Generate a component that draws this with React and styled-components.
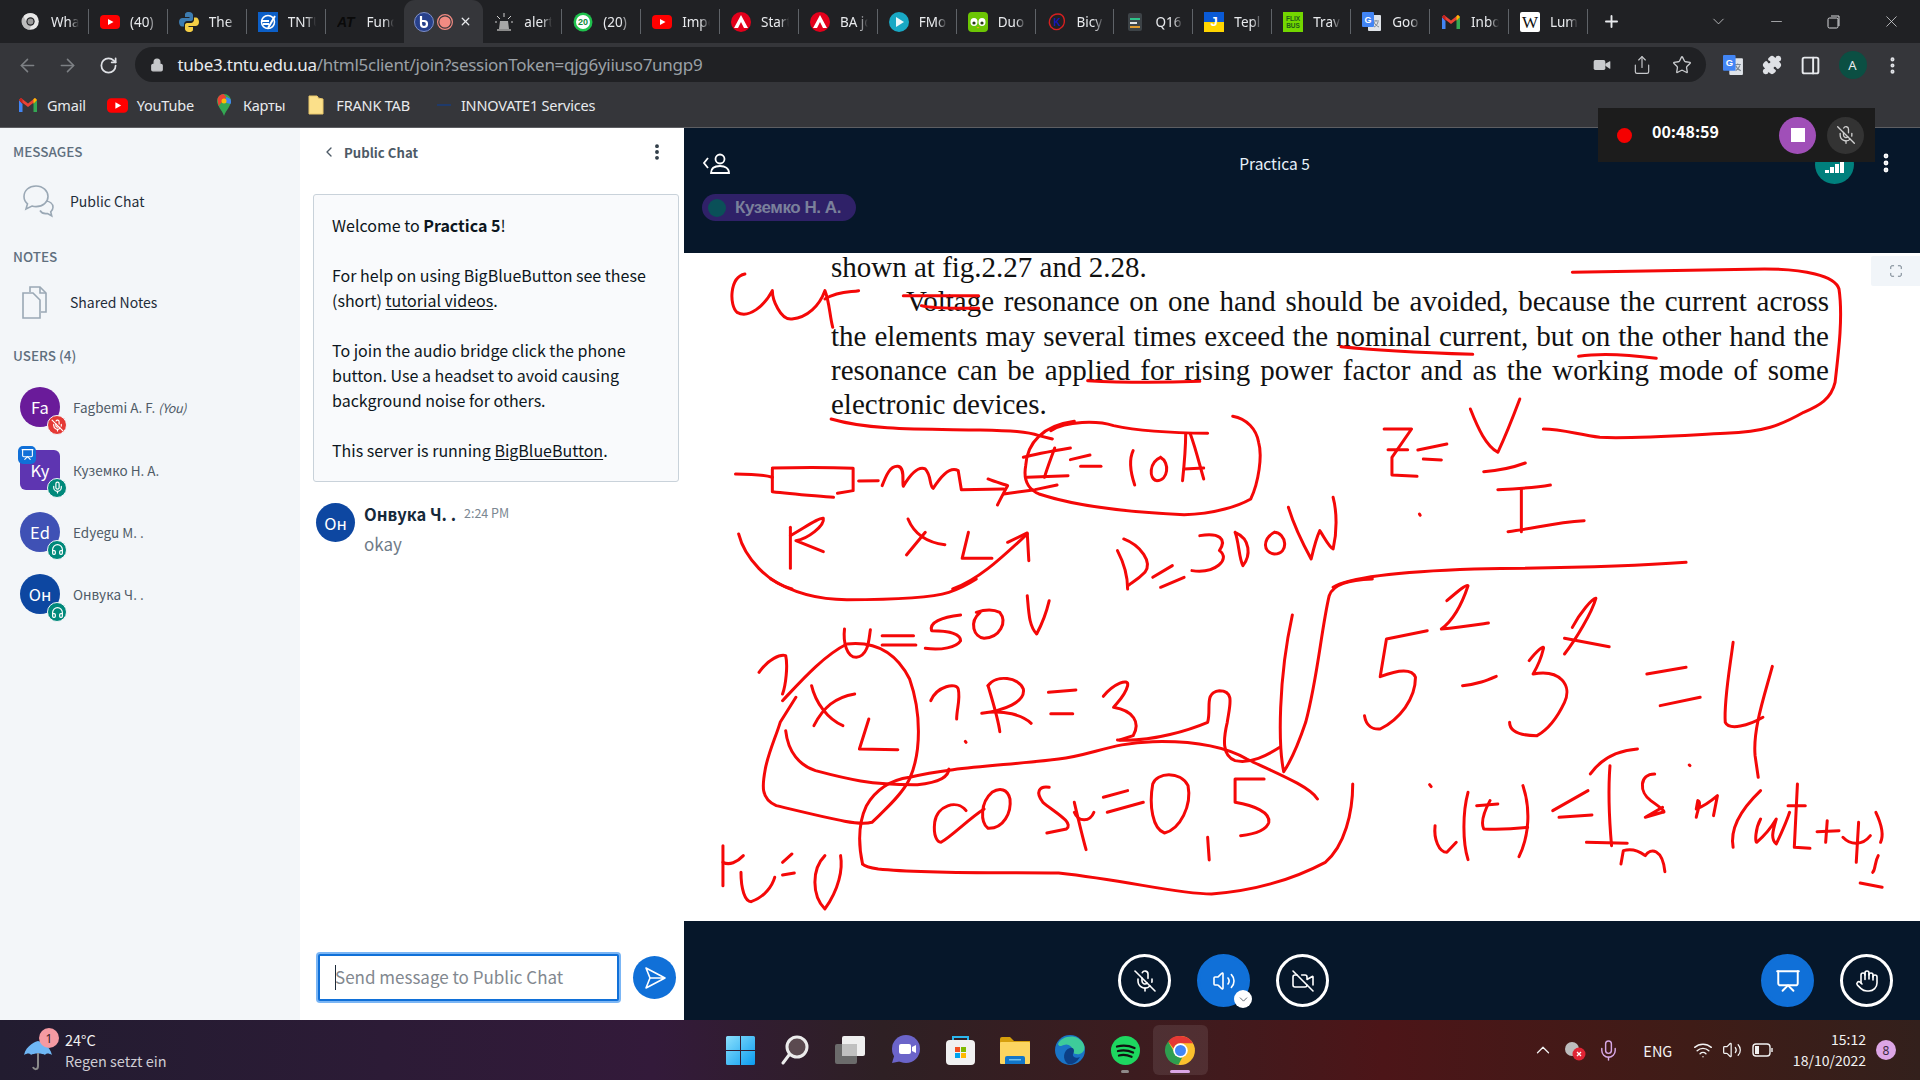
import React from "react";
import styled, { createGlobalStyle } from "styled-components";
import {
  ArrowLeft, ArrowRight, RotateCw, Lock, Minus, X, ChevronDown, ChevronUp, ChevronLeft, Plus, Star, Video,
  EllipsisVertical, Mic, MicOff, Headphones, Volume2, VideoOff, Presentation, Hand, PanelRight, Puzzle, Share,
  Wifi, Maximize,
} from "lucide-react";

const CHROME_FONT = `"Noto Sans", "Open Sans", sans-serif`;
const BBB_FONT = `"Noto Sans CJK SC", "Noto Sans", sans-serif`;

const GlobalStyle = createGlobalStyle`
  html, body { margin: 0; padding: 0; background: #06172a; }
  * { box-sizing: border-box; }
`;

const Page = styled.div`
  width: 1920px;
  height: 1080px;
  overflow: hidden;
  display: flex;
  flex-direction: column;
  position: relative;
  font-family: ${CHROME_FONT};
`;

/* ---------- browser chrome ---------- */
const TabStrip = styled.div`
  height: 43px;
  flex: none;
  background: #202124;
  display: flex;
  align-items: stretch;
  padding-left: 10px;
  color: #e8eaed;
`;
const Tab = styled.div`
  width: 78.9px;
  flex: none;
  display: flex;
  align-items: center;
  gap: 10px;
  padding-left: ${(p) => (p.$active ? "10px" : "11px")};
  padding-right: 10px;
  position: relative;
  background: ${(p) => (p.$active ? "#35363a" : "transparent")};
  border-radius: ${(p) => (p.$active ? "11px 11px 0 0" : "0")};
  &::after {
    content: "";
    display: ${(p) => (p.$noSep ? "none" : "block")};
    position: absolute;
    right: 0;
    top: 9px;
    height: 25px;
    width: 1px;
    background: #5f6368;
  }
`;
const TabIcon = styled.span`
  width: 20px;
  height: 20px;
  flex: none;
  display: block;
  margin-right: ${(p) => p.$mr || 0}px;
  & svg { display: block; }
`;
const TabClose = styled(X)`
  flex: none;
  margin-left: -4px;
`;
const TabTitle = styled.span`
  font-size: 13.5px;
  line-height: 18px;
  white-space: nowrap;
  overflow: hidden;
  flex: 1;
  min-width: 0;
  -webkit-mask-image: linear-gradient(90deg, #000 65%, transparent 100%);
  mask-image: linear-gradient(90deg, #000 65%, transparent 100%);
`;
const NewTab = styled.div`
  width: 47px;
  display: flex;
  align-items: center;
  justify-content: center;
`;
const WindowControls = styled.div`
  margin-left: auto;
  display: flex;
  align-items: center;
  color: #d6d8da;
`;
const WindowBtn = styled.div`
  width: 57.5px;
  height: 100%;
  display: flex;
  align-items: center;
  justify-content: center;
`;
const Toolbar = styled.div`
  height: 44px;
  flex: none;
  background: #35363a;
  display: flex;
  align-items: center;
  padding: 0 0 0 7px;
  color: #c7c9cc;
`;
const NavBtn = styled.div`
  width: 40.5px;
  display: flex;
  justify-content: center;
  color: ${(p) => (p.$dim ? "#7d8084" : "#dfe1e5")};
`;
const Omnibox = styled.div`
  margin-left: 6px;
  width: 1571px;
  height: 35px;
  margin-top: -1px;
  border-radius: 18px;
  background: #202124;
  display: flex;
  align-items: center;
  padding: 0 10px 0 15px;
`;
const Url = styled.div`
  margin-left: 14px;
  font-size: 17px;
  line-height: 22px;
  letter-spacing: -0.28px;
  color: #9aa0a6;
  white-space: nowrap;
  flex: 1;
  & b { font-weight: 400; color: #e8eaed; }
`;
const OmniActions = styled.div`
  display: flex;
  align-items: center;
  gap: 20px;
  color: #c8cacd;
  padding-right: 4px;
`;
const ToolIcons = styled.div`
  display: flex;
  align-items: center;
  gap: 18px;
  margin-left: 17px;
`;
const ToolMenu = styled(EllipsisVertical)`
  margin-left: -3px;
`;
const ProfileDot = styled.div`
  width: 28px;
  height: 28px;
  border-radius: 50%;
  background: #0b4f43;
  color: #e8eaed;
  font-size: 13px;
  display: flex;
  align-items: center;
  justify-content: center;
`;
const Bookmarks = styled.div`
  height: 41px;
  flex: none;
  background: #35363a;
  display: flex;
  align-items: center;
  padding: 0 0 4px 18px;
  border-bottom: 1px solid #5d5e62;
`;
const Bookmark = styled.div`
  display: flex;
  align-items: center;
  gap: ${(p) => p.$inner || 9}px;
  margin-right: ${(p) => p.$gap}px;
  font-size: 14.5px;
  line-height: 18px;
  letter-spacing: -0.2px;
  color: #e8eaed;
  white-space: nowrap;
  & svg { display: block; flex: none; }
`;

/* ---------- bigbluebutton ---------- */
const Content = styled.div`
  flex: 1;
  min-height: 0;
  display: flex;
  font-family: ${BBB_FONT};
`;
const Sidebar = styled.aside`
  width: 300px;
  flex: none;
  background: #f3f6f9;
  padding: 14px 0 0 13px;
`;
const SectionTitle = styled.div`
  font-size: 13.5px;
  line-height: 18px;
  font-weight: 500;
  color: #5f6f7e;
  margin-bottom: ${(p) => p.$after}px;
`;
const NavRow = styled.div`
  display: flex;
  align-items: center;
  height: 40px;
  padding-left: 9px;
  font-size: 14px;
  color: #1f2d3a;
  margin-bottom: ${(p) => p.$after}px;
`;
const NavIcon = styled.span`
  width: 48px;
  flex: none;
  display: block;
  & svg { display: block; }
`;
const UserRow = styled.div`
  display: flex;
  align-items: center;
  height: 62.4px;
  padding-left: 7px;
`;
const Avatar = styled.div`
  width: ${(p) => p.$size || 40}px;
  height: ${(p) => p.$size || 40}px;
  flex: none;
  border-radius: ${(p) => (p.$square ? "6px" : "50%")};
  background: ${(p) => p.$bg};
  color: #fff;
  display: flex;
  align-items: center;
  justify-content: center;
  font-size: 16.5px;
  font-weight: 400;
  position: relative;
`;
const StatusBadge = styled.span`
  position: absolute;
  right: -7px;
  bottom: -8px;
  width: 20px;
  height: 20px;
  border-radius: 50%;
  background: ${(p) => p.$bg};
  color: #fff;
  border: 1px solid #f3f6f9;
  display: flex;
  align-items: center;
  justify-content: center;
`;
const PresenterBadge = styled.span`
  position: absolute;
  left: -2px;
  top: -4px;
  width: 18px;
  height: 18px;
  border-radius: 5px;
  background: #1070d8;
  color: #fff;
  display: flex;
  align-items: center;
  justify-content: center;
`;
const UserName = styled.div`
  margin-left: 13px;
  font-size: 13.5px;
  color: #4f5b67;
  white-space: nowrap;
  & i { font-size: 12.5px; letter-spacing: -0.4px; }
`;
const ChatPanel = styled.section`
  width: 384px;
  flex: none;
  background: #fff;
  display: flex;
  flex-direction: column;
  padding: 0 5px 0 13px;
`;
const ChatHeader = styled.div`
  height: 48px;
  flex: none;
  display: flex;
  align-items: center;
  padding-left: 8px;
  color: #4d5a66;
  font-size: 13.2px;
  font-weight: 700;
  & span { margin-left: 7px; flex: 1; }
  & svg { display: block; }
`;
const ChatMenu = styled(EllipsisVertical)`
  margin-right: 12px;
`;
const Welcome = styled.div`
  margin-top: 18px;
  height: 288px;
  flex: none;
  border: 1px solid #c9d2da;
  border-radius: 3px;
  background: #f9fafc;
  padding: 18px 10px 0 18px;
  font-size: 16px;
  line-height: 25px;
  color: #0d1620;
  & p { margin: 0 0 25px; }
  & u { text-underline-offset: 2px; }
  & b { font-weight: 700; }
`;
const Message = styled.div`
  display: flex;
  margin-top: 21px;
  padding-left: 3px;
  flex: 1;
`;
const MessageBody = styled.div`
  margin-left: 9px;
`;
const MessageHead = styled.div`
  display: flex;
  align-items: baseline;
  gap: 8px;
  font-size: 16.5px;
  line-height: 22px;
  font-weight: 700;
  color: #16293a;
  & time { font-size: 12.5px; font-weight: 400; color: #7b8792; position: relative; top: -3px; }
`;
const MessageText = styled.div`
  margin-top: 5px;
  font-size: 17px;
  line-height: 24px;
  color: #6f7b87;
`;
const Composer = styled.div`
  display: flex;
  align-items: center;
  gap: 14px;
  height: 51px;
  margin-bottom: 17px;
  padding-left: 5px;
`;
const ComposerInput = styled.div`
  width: 301px;
  height: 47px;
  background: #fff;
  border: 2px solid #1070d8;
  border-radius: 2px;
  box-shadow: 0 0 0 2px #7bb6f5;
  display: flex;
  align-items: center;
  padding: 0 0 2px 15px;
  font-size: 17px;
  color: #82888f;
  position: relative;
  &::before {
    content: "";
    position: absolute;
    left: 15px;
    top: 9px;
    height: 25px;
    width: 1px;
    background: #1c2b3a;
  }
`;
const SendBtn = styled.div`
  width: 43px;
  height: 43px;
  border-radius: 50%;
  background: #1070d8;
  display: flex;
  align-items: center;
  justify-content: center;
`;
const Main = styled.main`
  flex: 1;
  min-width: 0;
  display: flex;
  flex-direction: column;
  background: #06172a;
`;
const MeetingHeader = styled.div`
  height: 125px;
  flex: none;
  padding: 25px 22px 0 18px;
  color: #f0f4f8;
`;
const HeaderRow = styled.div`
  display: flex;
  align-items: center;
  height: 20px;
`;
const MeetingTitle = styled.div`
  flex: 1;
  padding-left: 4px;
  font-size: 15.5px;
  line-height: 20px;
  color: #e7f1fa;
  text-align: center;
`;
const HeaderRight = styled.div`
  display: flex;
  align-items: center;
  gap: 20px;
`;
const Signal = styled.div`
  width: 39px;
  height: 39px;
  border-radius: 50%;
  background: #00807d;
  display: flex;
  align-items: flex-end;
  justify-content: center;
  padding: 0 0 11px;
  gap: 1px;
  margin-top: 2px;
`;
const SignalBar = styled.span`
  width: 4px;
  height: ${(p) => p.$h}px;
  background: #fff;
`;
const TalkerPill = styled.div`
  margin-top: 21px;
  width: 154px;
  height: 27px;
  border-radius: 14px;
  background: #2f2168;
  display: flex;
  align-items: center;
  padding-left: 6px;
  font-family: "Liberation Sans", sans-serif;
  font-size: 17px;
  font-weight: 700;
  letter-spacing: -0.45px;
  color: #7a809b;
  & span { margin-left: 9px; white-space: nowrap; }
`;
const TalkerDot = styled.div`
  width: 18px;
  height: 18px;
  border-radius: 50%;
  background: #0a5058;
`;
const Slide = styled.div`
  height: 668px;
  flex: none;
  background: #fff;
  position: relative;
  overflow: hidden;
`;
const SlideText = styled.div`
  margin: -3px 0 0 147px;
  width: 998px;
  font-family: "Liberation Serif", "Times New Roman", serif;
  font-size: 29px;
  color: #111;
`;
const SlideLine = styled.div`
  height: 34.3px;
  line-height: 34.3px;
  text-align-last: ${(p) => (p.$justify ? "justify" : "left")};
  white-space: ${(p) => (p.$justify ? "normal" : "nowrap")};
  word-spacing: ${(p) => (p.$justify ? "-3px" : "0")};
  padding-left: ${(p) => p.$indent || 0}px;
`;
const Ink = styled.svg`
  position: absolute;
  inset: 0;
  width: 100%;
  height: 100%;
  pointer-events: none;
  & path {
    fill: none;
    stroke: #f40808;
    stroke-width: 3px;
    stroke-linecap: round;
    stroke-linejoin: round;
    vector-effect: non-scaling-stroke;
  }
`;
const FullscreenBtn = styled.div`
  position: absolute;
  right: 0;
  top: 3px;
  width: 49px;
  height: 30px;
  background: #f1f5f9;
  border-radius: 2px 0 0 2px;
  display: flex;
  align-items: center;
  justify-content: center;
  color: #6d7b88;
`;
const ActionBar = styled.div`
  flex: 1;
  display: grid;
  grid-template-columns: 434px 1fr auto;
  align-items: start;
  padding: 33px 27px 0 0;
`;
const ActionGroup = styled.div`
  display: flex;
  gap: ${(p) => p.$gap}px;
  grid-column: ${(p) => p.$col};
`;
const RoundBtn = styled.div`
  width: 53px;
  height: 53px;
  border-radius: 50%;
  background: ${(p) => (p.$filled ? "#1070d8" : "transparent")};
  border: 3px solid ${(p) => (p.$filled ? "#1070d8" : "#fff")};
  color: #fff;
  display: flex;
  align-items: center;
  justify-content: center;
  position: relative;
`;
const CaretBadge = styled.span`
  position: absolute;
  right: -5px;
  bottom: -4px;
  width: 18px;
  height: 18px;
  border-radius: 50%;
  background: #fff;
  color: #48525c;
  display: flex;
  align-items: center;
  justify-content: center;
`;
const RecorderPanel = styled.div`
  position: absolute;
  left: 1598px;
  top: 108px;
  width: 277px;
  height: 54px;
  background: #1c1c1c;
  display: flex;
  align-items: center;
  padding-left: 19px;
`;
const RecDot = styled.div`
  width: 15px;
  height: 15px;
  border-radius: 50%;
  background: #f50000;
`;
const RecTime = styled.div`
  margin: -8px 0 0 20px;
  width: 128px;
  font-family: ${BBB_FONT};
  font-size: 16px;
  line-height: 20px;
  font-weight: 700;
  color: #fff;
`;
const RecBtn = styled.div`
  width: 37px;
  height: 37px;
  border-radius: 50%;
  margin-right: 11px;
  background: ${(p) => p.$bg};
  color: #d0d0d0;
  display: flex;
  align-items: center;
  justify-content: center;
`;
const RecStop = styled.span`
  width: 14px;
  height: 14px;
  background: #fff;
`;

/* ---------- windows taskbar ---------- */
const Taskbar = styled.footer`
  height: 60px;
  flex: none;
  display: grid;
  grid-template-columns: 1fr auto 1fr;
  align-items: center;
  color: #f2f2f2;
  background: linear-gradient(90deg, #221c30 0%, #2c1b36 20%, #331a3a 34%, #2e2024 46%, #3f1b1e 62%, #4c1518 72%, #3f1c17 88%, #33201c 100%);
`;
const Weather = styled.div`
  display: flex;
  align-items: center;
  padding-left: 23px;
  gap: 10px;
`;
const WeatherIcon = styled.div`
  width: 32px;
  height: 34px;
  position: relative;
  & svg { position: absolute; top: 6px; left: 0; }
`;
const AlertBadge = styled.span`
  position: absolute;
  right: -4px;
  top: -5px;
  width: 20px;
  height: 20px;
  border-radius: 50%;
  background: #f59aa2;
  color: #3a1a22;
  font-size: 12px;
  display: flex;
  align-items: center;
  justify-content: center;
`;
const WeatherText = styled.div`
  font-family: ${BBB_FONT};
  font-size: 14.5px;
  line-height: 21px;
  & small { display: block; font-size: 14.5px; color: #cfcdd4; }
`;
const TaskIcons = styled.div`
  display: flex;
  align-items: center;
`;
const TaskIcon = styled.div`
  width: 55px;
  height: 50px;
  display: flex;
  align-items: center;
  justify-content: center;
  position: relative;
  border-radius: 6px;
  background: ${(p) => (p.$active ? "rgba(255,255,255,.09)" : "transparent")};
  & svg { display: block; }
`;
const RunDot = styled.span`
  position: absolute;
  bottom: 2px;
  left: 50%;
  transform: translateX(-50%);
  height: 3px;
  border-radius: 2px;
  width: ${(p) => (p.$active ? 20 : 8)}px;
  background: ${(p) => (p.$active ? "#dca6e6" : "#8f8a8a")};
`;
const Tray = styled.div`
  display: flex;
  align-items: center;
  justify-content: flex-end;
  padding-right: 24px;
  color: #f2f2f2;
`;
const TrayIcon = styled.span`
  width: ${(p) => p.$w}px;
  display: flex;
  justify-content: center;
  color: ${(p) => p.$color || "inherit"};
`;
const Lang = styled.div`
  font-family: ${BBB_FONT};
  font-size: 14.5px;
  width: 62px;
  text-align: center;
`;
const Clock = styled.div`
  font-family: ${BBB_FONT};
  font-size: 14px;
  line-height: 21px;
  text-align: right;
  margin-left: 13px;
  white-space: nowrap;
`;
const NotifyBadge = styled.div`
  width: 20px;
  height: 20px;
  margin-left: 10px;
  border-radius: 50%;
  background: #dca6e6;
  color: #3b2a3f;
  font-size: 12px;
  display: flex;
  align-items: center;
  justify-content: center;
`;

/* ---------- small logos ---------- */
const ChromeLogo = ({ size = 20, mono }) => (
  <svg width={size} height={size} viewBox="0 0 48 48">
    <circle cx="24" cy="24" r="21" fill={mono ? "#e8e8e8" : "#fbc02d"} />
    <path fill={mono ? "#e8e8e8" : "#e53935"} d="M24 3a21 21 0 0 1 18.2 10.5H24a10.500 10.500 0 0 0-10 7.500L6 10.900A21 21 0 0 1 24 3z" />
    <path fill={mono ? "#bdbdbd" : "#2e9e4f"} d="M6 10.900l9 15.700a10.500 10.500 0 0 0 11.500 7.500L21 44.800A21 21 0 0 1 6 10.900z" />
    <circle cx="24" cy="24" r="10.500" fill={mono ? "#202124" : "#fff"} />
    {!mono && <circle cx="24" cy="24" r="8" fill="#4286f5" />}
    {mono && <circle cx="24" cy="24" r="7.500" fill="#9a9a9a" />}
  </svg>
);
const YouTubeLogo = ({ size = 20 }) => (
  <svg width={size} height={size} viewBox="0 0 20 20">
    <rect y="3" width="20" height="14" rx="4" fill="#f00" />
    <path d="M8 7l5.500 3L8 13z" fill="#fff" />
  </svg>
);
const GoogleTranslate = ({ size = 20 }) => (
  <svg width={size} height={size} viewBox="0 0 20 20">
    <rect x="6" y="3" width="13" height="16" rx="1" fill="#dfe3e8" />
    <path d="M11 9h6M14 8v1M12 10c1 3 3 4 5 5M16 10c-1 3-2 4-4 5" stroke="#7d8793" fill="none" />
    <rect x="0" y="0" width="12" height="15" rx="1" fill="#4285f4" />
    <text x="6" y="10.500" fontSize="9" fontWeight="700" fill="#fff" textAnchor="middle" fontFamily="Liberation Sans">G</text>
  </svg>
);
const GmailLogo = ({ size = 20 }) => (
  <svg width={size} height={size} viewBox="0 0 20 20">
    <path d="M1 5v12h3.500V9z" fill="#4285f4" />
    <path d="M19 5v12h-3.500V9z" fill="#34a853" />
    <path d="M1 5l9 7 9-7-2-2-7 5.500L3 3z" fill="#ea4335" />
    <path d="M1 5l2-2 1.500 1v5z" fill="#c5221f" />
    <path d="M19 5l-2-2-1.500 1v5z" fill="#fbbc04" />
  </svg>
);
const RedA = () => (
  <svg width="20" height="20" viewBox="0 0 20 20">
    <circle cx="10" cy="10" r="10" fill="#e3001b" />
    <path d="M3 16L10 3l7 13h-4l-3-6-3 6z" fill="#fff" />
  </svg>
);

const renderFavicon = (kind) => {
  switch (kind) {
    case "chrome":
      return <ChromeLogo size={19} mono />;
    case "yt":
      return <YouTubeLogo />;
    case "python":
      return (
        <svg width="20" height="20" viewBox="0 0 20 20">
          <path d="M10 0C6 0 6 2 6 3v2h4.500v1H3.500C1.500 6 0 7.500 0 10s1.500 4.500 3 4.500h2V12c0-1.500 1.500-3 3-3h4c1.200 0 2-1 2-2V3c0-1.500-1.500-3-4-3z" fill="#3d7cb1" />
          <path d="M10 20c4 0 4-2 4-3v-2H9.500v-1h7c2 0 3.500-1.500 3.500-4s-1.500-4.500-3-4.500h-2V8c0 1.500-1.500 3-3 3H8c-1.200 0-2 1-2 2v4c0 1.500 1.500 3 4 3z" fill="#f6cf45" />
        </svg>
      );
    case "tntu":
      return (
        <svg width="20" height="20" viewBox="0 0 20 20">
          <rect width="20" height="20" fill="#0c5fc7" />
          <circle cx="10" cy="10" r="6.500" fill="none" stroke="#fff" strokeWidth="1.500" />
          <path d="M3 9h8M5 12h6M17 4l-7 12" stroke="#fff" strokeWidth="2" />
        </svg>
      );
    case "at":
      return (
        <svg width="20" height="20" viewBox="0 0 20 20">
          <text x="0" y="15" fontSize="14" fontStyle="italic" fontWeight="700" fill="#0a0a0a" fontFamily="Liberation Sans">AT</text>
        </svg>
      );
    case "siren":
      return (
        <svg width="20" height="20" viewBox="0 0 20 20">
          <path d="M6 9h8l1 8H5z" fill="#a7a7a7" />
          <rect x="3" y="17" width="14" height="2" fill="#8b8b8b" />
          <path d="M10 1v4M3 4l3 3M17 4l-3 3M1 10h2M17 10h2" stroke="#d0d0d0" />
        </svg>
      );
    case "wa":
      return (
        <svg width="20" height="20" viewBox="0 0 20 20">
          <circle cx="10" cy="10" r="9.500" fill="#1fc24d" />
          <circle cx="10" cy="10" r="7" fill="#fff" />
          <text x="10" y="13" fontSize="9" fontWeight="700" fill="#128c3a" textAnchor="middle" fontFamily="Liberation Sans">20</text>
        </svg>
      );
    case "aa":
      return <RedA />;
    case "fmo":
      return (
        <svg width="20" height="20" viewBox="0 0 20 20">
          <circle cx="10" cy="10" r="10" fill="#18a8c4" />
          <path d="M7 5l8 5-8 5z" fill="#eaf7fa" />
        </svg>
      );
    case "duo":
      return (
        <svg width="20" height="20" viewBox="0 0 20 20">
          <rect width="20" height="20" rx="4" fill="#6cc604" />
          <ellipse cx="6" cy="10" rx="3.500" ry="4" fill="#fff" />
          <ellipse cx="14" cy="10" rx="3.500" ry="4" fill="#fff" />
          <circle cx="6" cy="11" r="1.600" fill="#243a12" />
          <circle cx="14" cy="11" r="1.600" fill="#243a12" />
          <path d="M8.500 15l1.500 1.500 1.500-1.500z" fill="#f4a81d" />
        </svg>
      );
    case "k":
      return (
        <svg width="20" height="20" viewBox="0 0 20 20">
          <path d="M4 15C0 9 4 2 11 2s8 9 4 13-8 3-11 0z" fill="none" stroke="#d62020" strokeWidth="1.400" />
          <text x="10" y="14" fontSize="10" fontWeight="700" fill="#1416b8" textAnchor="middle" fontFamily="Liberation Sans">K</text>
        </svg>
      );
    case "q":
      return (
        <svg width="20" height="20" viewBox="0 0 20 20">
          <rect x="3" y="1" width="14" height="18" rx="2" fill="#3d4347" />
          <rect x="5" y="6" width="10" height="2" fill="#2fc28a" />
          <rect x="5" y="10" width="7" height="2" fill="#e4e4e4" />
          <rect x="5" y="14" width="10" height="2" fill="#e09a2e" />
        </svg>
      );
    case "ua":
      return (
        <svg width="20" height="20" viewBox="0 0 20 20">
          <rect width="20" height="10" fill="#0a5ad6" />
          <rect y="10" width="20" height="10" fill="#ffd500" />
          <text x="10" y="14" fontSize="13" fontWeight="700" fill="#fff" textAnchor="middle" fontFamily="Liberation Sans">J</text>
        </svg>
      );
    case "flix":
      return (
        <svg width="20" height="20" viewBox="0 0 20 20">
          <rect width="20" height="20" fill="#73d700" />
          <text x="10" y="9" fontSize="6.500" fontWeight="700" fill="#1d5c18" textAnchor="middle" fontFamily="Liberation Sans">FLIX</text>
          <text x="10" y="16" fontSize="6.500" fontWeight="700" fill="#1d5c18" textAnchor="middle" fontFamily="Liberation Sans">BUS</text>
        </svg>
      );
    case "gt":
      return <GoogleTranslate />;
    case "gmail":
      return <GmailLogo />;
    case "wiki":
      return (
        <svg width="20" height="20" viewBox="0 0 20 20">
          <rect width="20" height="20" rx="2" fill="#fff" />
          <text x="10" y="16" fontSize="17" fill="#111" textAnchor="middle" fontFamily="Liberation Serif">W</text>
        </svg>
      );
    default:
      return null;
  }
};

const TABS = [
  ["chrome", "What"], ["yt", "(40)"], ["python", "The"], ["tntu", "TNTU"], ["at", "Func", true],
  ["active"], ["siren", "alert"], ["wa", "(20)"], ["yt", "Impe"], ["aa", "Start"], ["aa", "BA jo"],
  ["fmo", "FMo"], ["duo", "Duo"], ["k", "Bicy"], ["q", "Q16"], ["ua", "Tepl"], ["flix", "Trav"],
  ["gt", "Goo"], ["gmail", "Inbo"], ["wiki", "Lum"],
];

const Strokes = ({ d }) => d.map((s, i) => <path key={i} d={s} />);

const INK_TOP = [
  "M70 75C50 85 50 170 60 190C75 210 95 170 105 125C105 150 115 215 130 210C150 205 165 170 172 125C178 160 178 200 182 235",
  "M172 150C190 125 205 130 215 125",
  "M272 140L368 140", "M295 170C310 180 340 178 368 178",
  "M1125 70C1200 68 1300 62 1370 60C1420 60 1460 80 1465 120C1470 200 1465 300 1460 400C1455 450 1440 470 1420 490C1390 530 1370 548 1320 553C1260 560 1200 570 1160 565C1130 555 1110 540 1088 540",
  "M830 293C880 305 950 312 998 316", "M1133 322C1160 312 1200 318 1232 328", "M507 395C560 402 610 400 650 397",
  "M180 510C230 545 300 540 370 543C410 545 430 548 445 560L462 570",
  "M460 545C480 515 520 515 540 530C570 545 610 552 660 553",
  "M490 517C450 530 430 580 428 650C425 690 430 720 445 735C490 770 560 790 630 797C670 795 700 770 715 750C725 700 730 620 725 580C722 540 710 510 692 502",
  "M425 625C440 615 465 605 485 597", "M465 597C460 630 455 660 452 685", "M430 685L482 680", "M400 735L440 722L468 708",
  "M485 632L510 618", "M498 652L524 652", "M565 605C558 640 563 680 567 708",
  "M600 625C585 640 585 690 595 695C610 695 612 640 600 625",
  "M632 555C632 600 630 650 628 695", "M638 555C645 600 650 650 655 690", "M630 660L655 657",
  "M58 675C80 675 95 678 105 685", "M105 657C140 655 180 655 208 658L208 725L188 733", "M105 660L105 728C130 735 160 740 183 745",
  "M215 696L240 695",
  "M245 710C250 680 255 650 265 652C275 655 270 700 272 712C280 680 290 650 300 660C308 680 305 710 310 718C318 690 330 650 342 665L346 722L400 720",
  "M380 690C390 700 400 705 405 710C400 730 395 755 392 768",
  "M128 835L128 958", "M128 860C150 830 165 805 170 808C172 830 150 870 135 875L170 908",
  "M278 810C285 850 300 880 325 887", "M300 850L276 918", "M355 850L347 928L385 928",
  "M62 855C70 930 100 1000 130 1020", "M335 1020C370 990 400 920 430 855", "M405 880L430 852L432 935",
  "M885 540L920 540L895 625L895 678L927 682", "M890 602L915 602", "M928 603L965 585", "M935 630L958 633",
  "M995 480C1005 540 1015 590 1030 610C1040 560 1050 500 1058 450", "M1012 668C1030 665 1050 655 1065 642",
  "M1030 722C1050 720 1080 715 1097 708", "M1060 720L1060 848", "M1043 848C1075 840 1100 820 1140 815", "M930 795L931 799",
  "M545 905C555 950 558 990 558 1020", "M553 870C575 890 590 940 580 970C570 995 560 1005 558 1012",
  "M590 985L615 950", "M600 1015L630 985", "M650 860C675 850 685 870 675 905C690 930 670 975 640 965",
  "M695 850C700 880 700 930 705 950C715 920 715 870 695 850", "M745 850C730 870 730 910 745 915C765 915 760 850 745 850",
  "M763 775C770 830 785 900 792 930C795 900 800 860 803 845C810 870 815 895 820 900C825 850 825 790 820 745",
  "M820 1015C840 985 900 968 1000 960C1100 958 1200 952 1270 940",
];

const INK_BOTTOM = [
  "M103 0C130 40 160 62 200 62C260 62 310 55 330 40C345 28 355 15 365 0",
  "M870 0C840 3 820 15 815 50C805 150 800 300 785 430C775 500 765 550 757 578C750 500 750 300 768 108",
  "M197 150C195 190 200 235 212 235C228 230 228 180 230 152", "M245 170L285 170", "M245 198L288 198",
  "M345 108C320 115 305 130 308 155C330 155 345 165 345 185C340 205 320 215 300 208",
  "M370 100C355 130 362 175 375 178C395 175 405 130 395 100C385 88 375 92 365 100",
  "M430 50C432 100 432 140 442 165C450 130 455 95 458 65",
  "M118 365C140 310 170 230 200 195C240 185 265 230 280 300C295 400 295 520 280 600C270 650 245 700 232 730C215 740 190 725 110 680C90 660 92 620 96 570C100 520 110 470 115 430L135 355",
  "M88 280C100 240 115 225 122 230C125 260 122 320 118 345",
  "M155 320C160 370 175 420 195 440", "M210 345C185 355 170 385 158 440", "M228 420L216 510L265 512",
  "M307 365C315 320 340 310 342 330C345 360 340 390 340 420", "M351 487L352 490",
  "M380 320C385 360 393 420 395 458", "M380 320C390 285 420 295 425 330C428 370 400 395 372 403C400 390 425 410 435 433",
  "M457 340L492 333", "M460 404L488 404",
  "M527 352C540 315 560 295 558 320C555 350 545 370 540 385C565 395 575 430 565 470L548 483",
  "M122 455C125 520 140 560 160 575C200 600 230 618 290 617C320 610 330 590 330 570",
  "M220 855C215 800 213 740 225 680C235 640 250 605 280 595C330 565 400 560 470 540C510 530 540 490 590 488C640 485 680 500 710 540C740 575 790 620 800 660",
  "M845 615C845 700 835 800 810 850C770 900 720 935 665 945C620 945 560 905 470 882C400 880 300 885 240 870C225 865 222 860 220 855",
  "M545 483C590 490 640 450 660 430C665 390 655 340 675 335C695 335 688 380 685 430C680 480 678 530 695 545C715 555 735 530 752 505",
  "M352 695C340 660 315 680 312 730C310 770 315 790 320 790C335 770 355 720 375 690",
  "M385 640C370 670 370 730 380 748C400 750 410 700 408 660C405 630 395 625 385 640",
  "M458 625C445 620 440 640 450 670C465 700 490 730 480 750L455 762",
  "M490 670C495 720 500 770 505 812", "M490 700C495 730 510 730 515 700", "M527 655L558 635", "M532 700L578 670",
  "M590 615C585 680 590 750 605 762C625 750 640 680 635 620C625 575 595 580 590 615",
  "M660 775L662 843", "M732 600L695 600L695 670C720 680 740 700 738 730C735 755 720 765 702 770",
  "M940 155L888 180L880 293C900 275 920 265 925 295C925 360 905 420 880 450C870 452 862 440 860 410",
  "M965 65C980 35 990 15 992 20C985 70 975 120 958 150C980 145 1000 138 1018 132",
  "M985 320C1005 315 1015 305 1028 292",
  "M1070 245C1080 215 1090 195 1088 210C1085 240 1080 265 1075 285C1110 270 1125 320 1115 370C1105 420 1095 450 1080 470C1060 470 1045 460 1045 430",
  "M1125 145C1135 100 1150 60 1155 58C1150 100 1130 180 1115 225", "M1115 178L1172 203",
  "M1220 285L1270 265", "M1237 380L1288 355",
  "M1330 190C1325 280 1318 370 1320 430C1325 455 1350 440 1368 415", "M1380 262C1370 350 1355 450 1358 530L1362 595",
  "M943 617L945 623", "M950 740C948 780 955 820 965 820L977 790", "M992 640C985 700 985 790 992 842",
  "M1003 680L1030 675", "M1020 665C1012 700 1008 730 1012 750C1030 752 1050 750 1068 745", "M1062 620C1072 690 1070 770 1057 833",
  "M1100 695L1145 635", "M1108 715L1150 708", "M1148 585C1160 545 1180 515 1208 510", "M1173 560C1170 650 1172 720 1175 800",
  "M1143 790L1195 793", "M1187 855L1190 815C1205 805 1215 825 1218 830C1225 805 1240 810 1243 878",
  "M1230 585C1210 585 1210 640 1225 665C1240 690 1245 700 1240 700L1218 715L1240 685", "M1274 558L1275 560",
  "M1283 715C1285 690 1290 670 1285 665L1283 690C1295 680 1305 660 1310 650L1305 710",
  "M1365 635C1345 680 1325 740 1330 805",
  "M1365 720C1358 750 1358 790 1360 790C1370 770 1380 740 1385 720C1380 760 1378 780 1385 795C1390 770 1398 730 1402 700",
  "M1400 680L1422 680", "M1412 615L1408 805L1428 808", "M1437 758L1465 755", "M1450 725L1448 790",
  "M1470 775C1480 800 1495 800 1505 770", "M1490 730L1487 850", "M1512 700C1520 740 1522 770 1518 790",
  "M1515 830C1510 850 1512 870 1508 880", "M1492 912L1520 925",
  "M42 800L42 920", "M42 850C50 860 60 850 68 830", "M65 880C65 930 70 968 78 968C95 955 105 920 108 895",
  "M118 850L130 825", "M118 888L133 882", "M172 830C155 870 155 950 172 990C190 930 195 870 192 830",
];

const USERS = [
  { id: "Fa", name: "Fagbemi A. F.", you: true, bg: "#6a1b9a", badge: "#e53935", icon: MicOff },
  { id: "Ky", name: "Куземко Н. А.", square: true, presenter: true, bg: "#5e35b1", badge: "#00897b", icon: Mic },
  { id: "Ed", name: "Edyegu M. .", bg: "#3f51b5", badge: "#00897b", icon: Headphones },
  { id: "Он", name: "Онвука Ч. .", bg: "#0d47a1", badge: "#00897b", icon: Headphones },
];

const ChatBubbles = () => (
  <svg width="34" height="34" viewBox="0 0 34 34" fill="none" stroke="#9aa8b5" strokeWidth="1.600">
    <path d="M14 2C7 2 2 6.500 2 12.500c0 3 1.300 5.500 3.500 7.300L4 25l6-3c1.300.4 2.600.6 4 .6 7 0 12-4.600 12-10.100S21 2 14 2z" />
    <path d="M24 17c3.500.3 7 2.500 7 6.300 0 2-1 3.400-2.300 4.500l1 4-4.200-2.300c-3 .5-6-.5-7.500-3" />
  </svg>
);
const NotesIcon = () => (
  <svg width="26" height="34" viewBox="0 0 26 34" fill="none" stroke="#9aa8b5" strokeWidth="1.600">
    <path d="M8 7V2h10l6 6v19h-5" />
    <path d="M18 2v6h6" />
    <path d="M1 8h10l7 7v18H1z" />
  </svg>
);

const TASK_ICONS = [
  <svg key="win" width="29" height="29" viewBox="0 0 29 29">
    <defs><linearGradient id="w" x1="0" y1="0" x2="1" y2="1"><stop offset="0" stopColor="#8be0fc" /><stop offset="1" stopColor="#0b9cf0" /></linearGradient></defs>
    <path d="M0 1.500A1.500 1.500 0 0 1 1.500 0H14v14H0zM15 0h12.500A1.500 1.500 0 0 1 29 1.500V14H15zM0 15h14v14H1.500A1.500 1.500 0 0 1 0 27.500zM15 15h14v12.500a1.500 1.500 0 0 1-1.500 1.500H15z" fill="url(#w)" />
  </svg>,
  <svg key="search" width="28" height="30" viewBox="0 0 28 30">
    <circle cx="16" cy="12" r="10" fill="#5b4a50" stroke="#ececec" strokeWidth="3" />
    <path d="M8 20L2 28" stroke="#ececec" strokeWidth="3" strokeLinecap="round" />
  </svg>,
  <svg key="view" width="30" height="28" viewBox="0 0 30 28">
    <rect y="8" width="22" height="20" rx="2" fill="#6b6b6b" />
    <rect x="7" y="0" width="23" height="20" rx="2" fill="#efefef" />
    <rect x="7" y="8" width="15" height="12" fill="#c0c0c0" />
  </svg>,
  <svg key="teams" width="30" height="30" viewBox="0 0 30 30">
    <circle cx="16" cy="14" r="14" fill="#6b64c9" />
    <path d="M2 28l3-10 7 8z" fill="#6b64c9" />
    <rect x="9" y="9" width="12" height="10" rx="2" fill="#fff" />
    <path d="M22 12l4-2v8l-4-2z" fill="#fff" />
  </svg>,
  <svg key="store" width="29" height="30" viewBox="0 0 29 30">
    <path d="M7 7V2h15v5" fill="none" stroke="#2bb7ee" strokeWidth="2" />
    <rect y="5" width="29" height="25" rx="4" fill="#f1f1f1" />
    <rect x="9" y="12" width="5" height="5" fill="#f25022" /><rect x="15" y="12" width="5" height="5" fill="#7fba00" />
    <rect x="9" y="18" width="5" height="5" fill="#00a4ef" /><rect x="15" y="18" width="5" height="5" fill="#ffb900" />
  </svg>,
  <svg key="folder" width="30" height="27" viewBox="0 0 30 27">
    <path d="M0 2a2 2 0 0 1 2-2h8l4 4h16v4H0z" fill="#d69f0c" />
    <rect y="5" width="30" height="22" rx="1" fill="#fcd560" />
    <path d="M5 27v-6a2 2 0 0 1 2-2h16a2 2 0 0 1 2 2v6z" fill="#1276c9" />
    <rect x="9" y="22" width="12" height="1.500" fill="#6fc0f0" />
  </svg>,
  <svg key="edge" width="30" height="30" viewBox="0 0 30 30">
    <circle cx="15" cy="15" r="15" fill="#1a74c6" />
    <path d="M3 9C7 0 24-2 29 10c2 6-3 10-8 9-2 0-3-1-3-3 0-4-5-8-9-6-3 1-5 2-6-1z" fill="#3ecb9a" />
    <path d="M13 29C7 25 8 15 15 13c4-1 5 3 3 6-1 3 4 5 7 3-3 5-7 8-12 7z" fill="#0c3f86" />
  </svg>,
  <svg key="spotify" width="29" height="29" viewBox="0 0 29 29">
    <circle cx="14.500" cy="14.500" r="14.500" fill="#1ed760" />
    <path d="M6 10.500c6-1.500 12-1 17.500 1.500M7 15c5-1.200 10-.8 15 1.500M8 19.500c4-1 8-.7 12.500 1.200" fill="none" stroke="#111" strokeWidth="2.300" strokeLinecap="round" />
  </svg>,
];

export default function App() {
  return (
    <Page>
      <GlobalStyle />
      <TabStrip>
        {TABS.map(([kind, title, noSep], i) =>
          kind === "active" ? (
            <Tab key={i} $active $noSep>
              <TabIcon $mr={-8}>
                <svg width="20" height="20" viewBox="0 0 20 20">
                  <circle cx="10" cy="10" r="9.500" fill="#27408b" stroke="#7d8fc9" strokeWidth="1" />
                  <path d="M7 4v8a3 3 0 1 0 3-3H8" fill="none" stroke="#fff" strokeWidth="2.200" />
                </svg>
              </TabIcon>
              <TabIcon $mr={-3}>
                <svg width="18" height="20" viewBox="0 0 18 20">
                  <circle cx="9" cy="10" r="7.400" fill="none" stroke="#f28b82" strokeWidth="1.200" />
                  <circle cx="9" cy="10" r="5.600" fill="#f28b82" />
                </svg>
              </TabIcon>
              <TabClose size={13} strokeWidth={2.4} color="#e8eaed" />
            </Tab>
          ) : (
            <Tab key={i} $noSep={noSep}>
              <TabIcon>{renderFavicon(kind)}</TabIcon>
              <TabTitle>{title}</TabTitle>
            </Tab>
          )
        )}
        <NewTab><Plus size={19} strokeWidth={2.4} color="#e8eaed" /></NewTab>
        <WindowControls>
          <WindowBtn><ChevronDown size={19} strokeWidth={1} /></WindowBtn>
          <WindowBtn><Minus size={17} strokeWidth={1} /></WindowBtn>
          <WindowBtn>
            <svg width="14" height="14" viewBox="0 0 14 14" fill="none" stroke="currentColor">
              <rect x="1" y="3" width="10" height="10" rx="1.500" /><path d="M4 1h8v10" />
            </svg>
          </WindowBtn>
          <WindowBtn><X size={19} strokeWidth={1} /></WindowBtn>
        </WindowControls>
      </TabStrip>
      <Toolbar>
        <NavBtn $dim><ArrowLeft size={21} strokeWidth={1.8} /></NavBtn>
        <NavBtn $dim><ArrowRight size={21} strokeWidth={1.8} /></NavBtn>
        <NavBtn><RotateCw size={19} strokeWidth={2.2} /></NavBtn>
        <Omnibox>
          <Lock size={14} fill="#c7c9cc" strokeWidth={2} color="#c7c9cc" />
          <Url><b>tube3.tntu.edu.ua</b>/html5client/join?sessionToken=qjg6yiiuso7ungp9</Url>
          <OmniActions>
            <Video size={20} fill="#c8cacd" strokeWidth={0} />
            <Share size={20} strokeWidth={1.4} />
            <Star size={20} strokeWidth={1.6} />
          </OmniActions>
        </Omnibox>
        <ToolIcons>
          <GoogleTranslate size={21} />
          <Puzzle size={20} fill="#dfe1e5" color="#dfe1e5" />
          <PanelRight size={21} color="#e8eaed" strokeWidth={2.2} />
          <ProfileDot>A</ProfileDot>
          <ToolMenu size={21} color="#dfe1e5" strokeWidth={2.6} />
        </ToolIcons>
      </Toolbar>
      <Bookmarks>
        <Bookmark $gap={21}><GmailLogo />Gmail</Bookmark>
        <Bookmark $gap={20}><YouTubeLogo size={21} />YouTube</Bookmark>
        <Bookmark $gap={23}>
          <svg width="20" height="22" viewBox="0 0 20 22">
            <path d="M10 0a7 7 0 0 1 7 7c0 5-5 9-7 15-2-6-7-10-7-15a7 7 0 0 1 7-7z" fill="#34a853" />
            <path d="M3.500 5a7 7 0 0 1 6-5l3 3-8 9z" fill="#ea4335" />
            <path d="M12.500 3l4 2a7 7 0 0 1 0 5l-7-2z" fill="#4285f4" />
            <circle cx="10" cy="7" r="2.500" fill="#fbbc04" />
          </svg>
          Карты
        </Bookmark>
        <Bookmark $gap={26} $inner={12}>
          <svg width="16" height="20" viewBox="0 0 16 20"><path d="M1 1h8l1 1v1l5 1v15H1z" fill="#fbe08a" stroke="#e8c66a" /></svg>
          FRANK TAB
        </Bookmark>
        <Bookmark $gap={0}>
          <svg width="16" height="16" viewBox="0 0 16 16"><path d="M1 8h14" stroke="#1f3a6a" strokeWidth="2" /></svg>
          INNOVATE1 Services
        </Bookmark>
      </Bookmarks>
      <Content>
        <Sidebar>
          <SectionTitle $after={21}>MESSAGES</SectionTitle>
          <NavRow $after={26}><NavIcon><ChatBubbles /></NavIcon>Public Chat</NavRow>
          <SectionTitle $after={17}>NOTES</SectionTitle>
          <NavRow $after={24}><NavIcon><NotesIcon /></NavIcon>Shared Notes</NavRow>
          <SectionTitle $after={12}>USERS (4)</SectionTitle>
          {USERS.map((u) => (
            <UserRow key={u.name}>
              <Avatar $bg={u.bg} $square={u.square}>
                {u.id}
                {u.presenter && <PresenterBadge><Presentation size={13} strokeWidth={2} /></PresenterBadge>}
                <StatusBadge $bg={u.badge}><u.icon size={13} strokeWidth={2.2} /></StatusBadge>
              </Avatar>
              <UserName>{u.name} {u.you && <i>(You)</i>}</UserName>
            </UserRow>
          ))}
        </Sidebar>
        <ChatPanel>
          <ChatHeader>
            <ChevronLeft size={16} strokeWidth={2} />
            <span>Public Chat</span>
            <ChatMenu size={20} color="#2a3742" strokeWidth={2.6} />
          </ChatHeader>
          <Welcome>
            <p>Welcome to <b>Practica 5</b>!</p>
            <p>For help on using BigBlueButton see these<br />(short) <u>tutorial videos</u>.</p>
            <p>To join the audio bridge click the phone<br />button. Use a headset to avoid causing<br />background noise for others.</p>
            <p>This server is running <u>BigBlueButton</u>.</p>
          </Welcome>
          <Message>
            <Avatar $bg="#0d47a1" $size={39}>Он</Avatar>
            <MessageBody>
              <MessageHead>Онвука Ч. .<time>2:24 PM</time></MessageHead>
              <MessageText>okay</MessageText>
            </MessageBody>
          </Message>
          <Composer>
            <ComposerInput>Send message to Public Chat</ComposerInput>
            <SendBtn>
              <svg width="24" height="24" viewBox="0 0 24 24" fill="none" stroke="#fff" strokeWidth="1.600" strokeLinejoin="round">
                <path d="M3 2l19 10L3 22l4-10zM7 12h15" />
              </svg>
            </SendBtn>
          </Composer>
        </ChatPanel>
        <Main>
          <MeetingHeader>
            <HeaderRow>
              <svg width="28" height="22" viewBox="0 0 28 22" fill="none" stroke="#fff" strokeWidth="1.800">
                <path d="M6 6L2 11l4 5" />
                <circle cx="18" cy="7" r="4.500" />
                <path d="M9 21c0-5 4-7 9-7s9 2 9 7z" />
              </svg>
              <MeetingTitle>Practica 5</MeetingTitle>
              <HeaderRight>
                <Signal>
                  <SignalBar $h={3} /><SignalBar $h={6} /><SignalBar $h={9} /><SignalBar $h={12} />
                </Signal>
                <EllipsisVertical size={24} strokeWidth={2.8} color="#fff" />
              </HeaderRight>
            </HeaderRow>
            <TalkerPill><TalkerDot /><span>Куземко Н. А.</span></TalkerPill>
          </MeetingHeader>
          <Slide>
            <SlideText>
              <SlideLine>shown at fig.2.27 and 2.28.</SlideLine>
              <SlideLine $justify $indent={75}>Voltage resonance on one hand should be avoided, because the current across</SlideLine>
              <SlideLine $justify>the elements may several times exceed the nominal current, but on the other hand the</SlideLine>
              <SlideLine $justify>resonance can be applied for rising power factor and as the working mode of some</SlideLine>
              <SlideLine>electronic devices.</SlideLine>
            </SlideText>
            <Ink>
              <g transform="translate(6 -4) scale(0.7843 0.3333)"><Strokes d={INK_TOP} /></g>
              <g transform="translate(6 326) scale(0.7843 0.3333)"><Strokes d={INK_BOTTOM} /></g>
            </Ink>
            <FullscreenBtn><Maximize size={14} strokeWidth={1.6} /></FullscreenBtn>
          </Slide>
          <ActionBar>
            <ActionGroup $gap={26} $col={2}>
              <RoundBtn><MicOff size={24} strokeWidth={1.6} /></RoundBtn>
              <RoundBtn $filled>
                <Volume2 size={24} strokeWidth={1.6} />
                <CaretBadge><ChevronDown size={13} strokeWidth={1.6} /></CaretBadge>
              </RoundBtn>
              <RoundBtn><VideoOff size={24} strokeWidth={1.6} /></RoundBtn>
            </ActionGroup>
            <ActionGroup $gap={26} $col={3}>
              <RoundBtn $filled><Presentation size={26} strokeWidth={1.8} /></RoundBtn>
              <RoundBtn><Hand size={24} strokeWidth={1.6} /></RoundBtn>
            </ActionGroup>
          </ActionBar>
        </Main>
      </Content>
      <Taskbar>
        <Weather>
          <WeatherIcon>
            <svg width="30" height="34" viewBox="0 0 30 34">
              <path d="M1 16C3 6 14 2 15 2s12 4 14 14c-3-2-6-2-7 0-2-2-12-2-14 0-1-2-4-2-7 0z" fill="#6fb7f5" />
              <path d="M15 14v13c0 4-4 4-5 1" fill="none" stroke="#8a8a8a" strokeWidth="2" />
            </svg>
            <AlertBadge>1</AlertBadge>
          </WeatherIcon>
          <WeatherText>24°C<small>Regen setzt ein</small></WeatherText>
        </Weather>
        <TaskIcons>
          {TASK_ICONS.map((icon, i) => (
            <TaskIcon key={i}>
              {icon}
              {i === 7 && <RunDot />}
            </TaskIcon>
          ))}
          <TaskIcon $active>
            <ChromeLogo size={33} />
            <RunDot $active />
          </TaskIcon>
        </TaskIcons>
        <Tray>
          <TrayIcon $w={32}><ChevronUp size={22} strokeWidth={1.4} /></TrayIcon>
          <TrayIcon $w={32}>
            <svg width="22" height="24" viewBox="0 0 22 24">
              <circle cx="8" cy="11" r="7" fill="#bdbdbd" />
              <circle cx="15" cy="16" r="6.500" fill="#e02434" />
              <path d="M13 14l4 4M17 14l-4 4" stroke="#fff" strokeWidth="1.300" />
            </svg>
          </TrayIcon>
          <TrayIcon $w={36} $color="#d8a8e6"><Mic size={23} strokeWidth={1.5} /></TrayIcon>
          <Lang>ENG</Lang>
          <TrayIcon $w={29}><Wifi size={20} strokeWidth={1.7} /></TrayIcon>
          <TrayIcon $w={29}><Volume2 size={20} strokeWidth={1.5} /></TrayIcon>
          <TrayIcon $w={33}>
            <svg width="22" height="14" viewBox="0 0 22 14" fill="none" stroke="currentColor" strokeWidth="1.400">
              <rect x="1" y="1" width="17" height="12" rx="3" /><path d="M20 5v4" /><rect x="3" y="3" width="4" height="8" fill="currentColor" stroke="none" />
            </svg>
          </TrayIcon>
          <Clock>15:12<br />18/10/2022</Clock>
          <NotifyBadge>8</NotifyBadge>
        </Tray>
      </Taskbar>
      <RecorderPanel>
        <RecDot />
        <RecTime>00:48:59</RecTime>
        <RecBtn $bg="#a04fb8"><RecStop /></RecBtn>
        <RecBtn $bg="#333"><MicOff size={20} strokeWidth={1.6} /></RecBtn>
      </RecorderPanel>
    </Page>
  );
}
